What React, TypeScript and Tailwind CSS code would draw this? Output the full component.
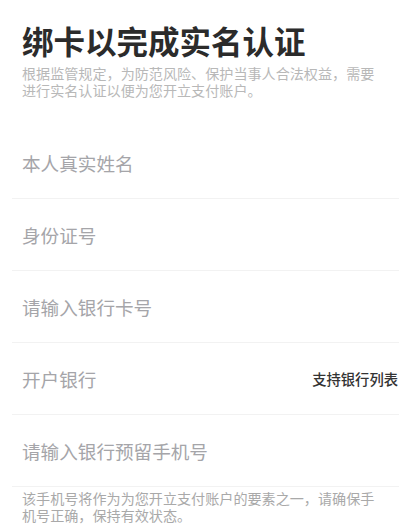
import React from "react";

const rows = ["本人真实姓名", "身份证号", "请输入银行卡号", "开户银行", "请输入银行预留手机号"];

export default function App() {
  return (
    <div
      className="w-[411px] h-[530px] bg-white overflow-hidden"
      style={{ fontFamily: '"Noto Sans CJK SC", "Noto Sans", sans-serif' }}
    >
      <div className="px-[22px] pt-[21px]">
        <h1 className="text-[31.5px] leading-[38px] font-bold text-[#2b2b2b]">绑卡以完成实名认证</h1>
        <p className="mt-[6px] w-[362px] text-[14.1px] leading-[17px] text-[#b8b8b8]">
          根据监管规定，为防范风险、保护当事人合法权益，需要进行实名认证以便为您开立支付账户。
        </p>
      </div>
      <div className="mt-[28px] mx-[12px]">
        {rows.map((r, i) => (
          <div key={r} className="h-[72px] border-b border-[#f2f2f2] flex items-center justify-between pl-[10px]">
            <span className="text-[18.6px] text-[#a5a5a9]">{r}</span>
            {i === 3 && (
              <span className="text-[14.3px] font-medium text-[#333333] pr-[1px]">支持银行列表</span>
            )}
          </div>
        ))}
      </div>
      <p className="mx-[22px] mt-[3px] w-[362px] text-[14.1px] leading-[17px] text-[#a9a9a9]">
        该手机号将作为为您开立支付账户的要素之一，请确保手机号正确，保持有效状态。
      </p>
    </div>
  );
}
